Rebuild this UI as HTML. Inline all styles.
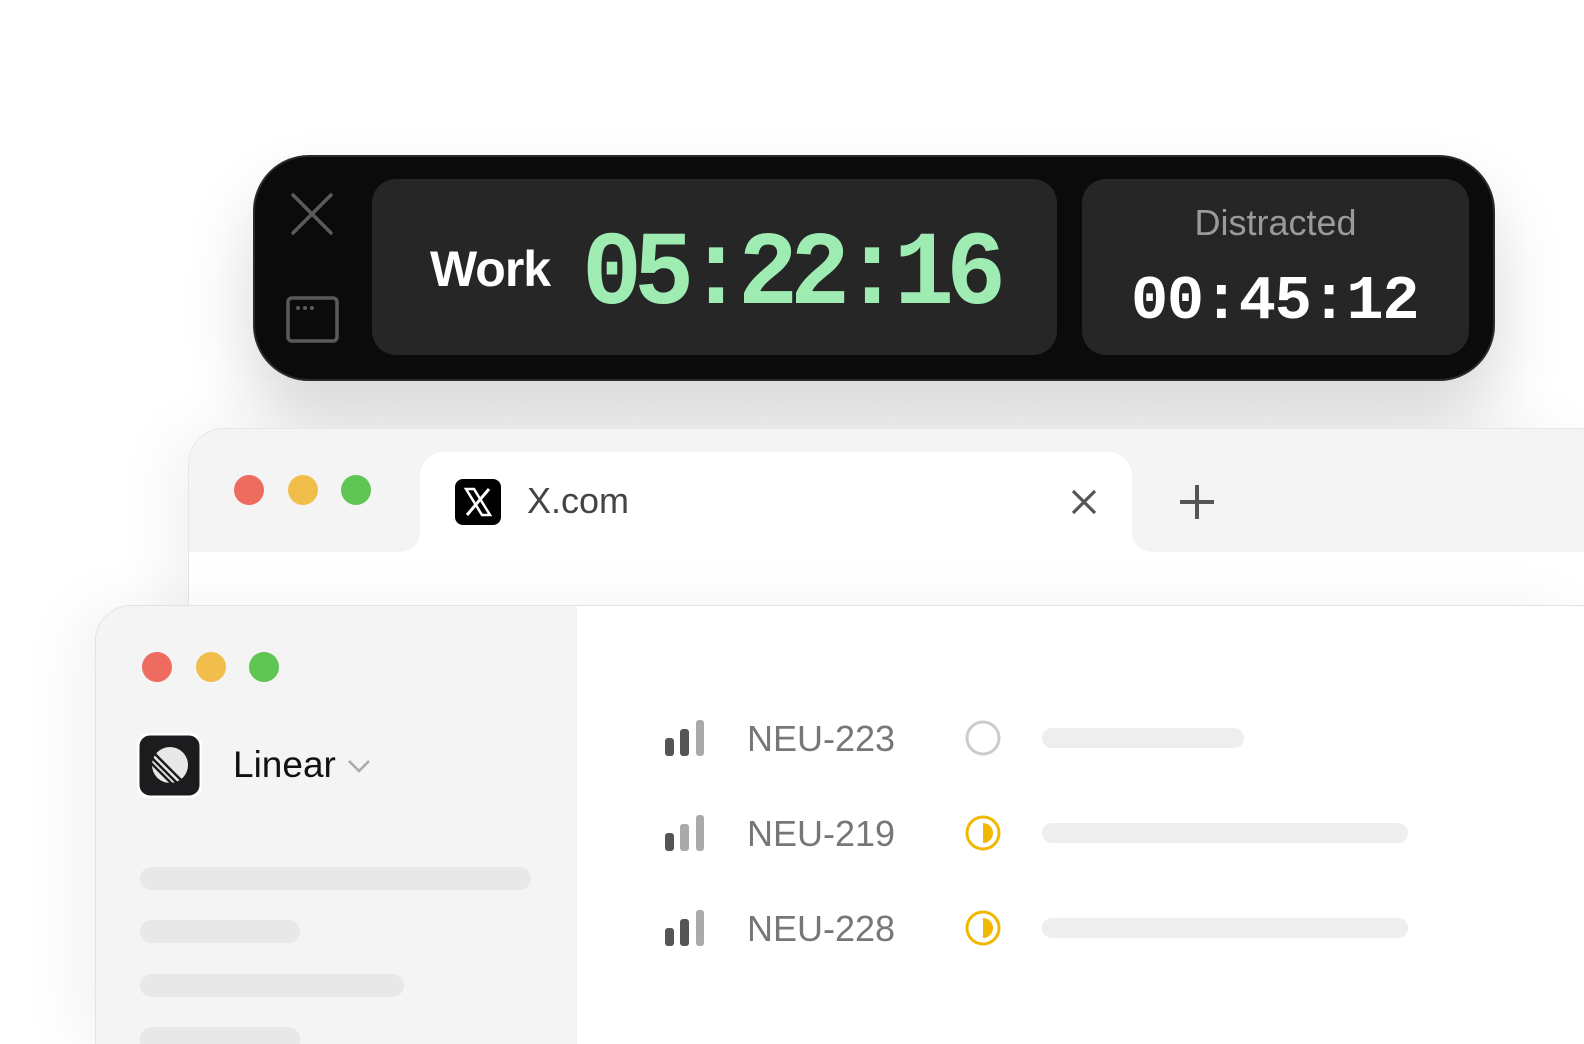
<!DOCTYPE html><html style="overflow:hidden;height:1044px"><head><style>
html,body{overflow:hidden}
body{margin:0;width:1584px;height:1044px;background:#fff;position:relative;overflow:hidden;font-family:"Liberation Sans",sans-serif}
#wrap{position:absolute;left:0;top:0;width:1584px;height:1044px;overflow:hidden}
.a{position:absolute}
.mono{font-family:"Liberation Mono","DejaVu Sans Mono",monospace;font-weight:bold}
.dot{position:absolute;width:30px;height:30px;border-radius:50%}
.r{background:#ee6b5f}.y{background:#f2be4b}.g{background:#5fc553}
.sk{position:absolute;background:#e8e8e8;border-radius:12px;height:23px}
</style></head><body><div id="wrap">
<div class="a" style="left:253px;top:155px;width:1238px;height:222px;border-radius:56px;background:#0b0b0b;border:2px solid #2a2a2a;box-shadow:0 40px 70px rgba(0,0,0,.16)"></div>
<svg class="a" style="left:286px;top:190px" width="54" height="156"><path d="M7 5L45 43M45 5L7 43" stroke="#5a5a5a" stroke-width="3.5" stroke-linecap="round"/><rect x="2" y="108" width="49" height="43" rx="4" fill="none" stroke="#5a5a5a" stroke-width="3.5"/><circle cx="12" cy="118" r="2" fill="#5a5a5a"/><circle cx="19" cy="118" r="2" fill="#5a5a5a"/><circle cx="26" cy="118" r="2" fill="#5a5a5a"/></svg>
<div class="a" style="left:372px;top:179px;width:685px;height:176px;border-radius:24px;background:#262626"></div>
<div class="a" style="left:430px;top:240px;font-size:50px;font-weight:bold;color:#fff;letter-spacing:-1px">Work</div>
<div class="a mono" style="left:582px;top:217px;font-size:100px;color:#9fecb2;letter-spacing:-8px;transform:scaleY(1.05);transform-origin:left top">05:22:16</div>
<div class="a" style="left:1082px;top:179px;width:387px;height:176px;border-radius:24px;background:#262626"></div>
<div class="a" style="left:1082px;width:387px;top:202px;text-align:center;font-size:36px;color:#9a9a9a">Distracted</div>
<div class="a mono" style="left:1131px;top:266px;font-size:62px;color:#fff;letter-spacing:-1.3px">00:45:12</div>
<div class="a" style="left:188px;top:428px;width:1396px;height:616px;border-radius:36px 0 0 0;background:#fff;border:1.5px solid #e6e6e6;border-right:none;border-bottom:none;overflow:hidden;box-shadow:-20px 0 60px rgba(0,0,0,.05)">
<div class="a" style="left:0;top:0;width:100%;height:123px;background:#f4f4f4"></div>
<div class="a" style="left:231px;top:23px;width:712px;height:100px;background:#fff;border-radius:24px 24px 0 0"></div>
<div class="a" style="left:211px;top:103px;width:20px;height:20px;background:#fff"></div><div class="a" style="left:211px;top:83px;width:20px;height:40px;background:#f4f4f4;border-radius:0 0 20px 0"></div>
<div class="a" style="left:943px;top:103px;width:20px;height:20px;background:#fff"></div><div class="a" style="left:943px;top:83px;width:20px;height:40px;background:#f4f4f4;border-radius:0 0 0 20px"></div>
</div>
<div class="dot r" style="left:234px;top:475px"></div><div class="dot y" style="left:288px;top:475px"></div><div class="dot g" style="left:341px;top:475px"></div>
<svg class="a" style="left:455px;top:479px" width="46" height="46"><rect width="46" height="46" rx="8" fill="#000"/><path d="M11 10h8l16 26h-8z" fill="none" stroke="#fff" stroke-width="2.5"/><path d="M34 10L12 36" stroke="#fff" stroke-width="3"/></svg>
<div class="a" style="left:527px;top:480px;font-size:36px;color:#444">X.com</div>
<svg class="a" style="left:1070px;top:488px" width="28" height="28"><path d="M3 3L25 25M25 3L3 25" stroke="#555" stroke-width="3.2"/></svg>
<svg class="a" style="left:1178px;top:483px" width="38" height="38"><path d="M19 2V36M2 19H36" stroke="#555" stroke-width="4"/></svg>
<div class="a" style="left:95px;top:605px;width:1489px;height:439px;border-radius:36px 0 0 0;background:#fff;border:1.5px solid #e3e3e3;border-right:none;border-bottom:none;overflow:hidden;box-shadow:-20px 0 60px rgba(0,0,0,.05)">
<div class="a" style="left:0;top:0;width:481px;height:100%;background:#f4f4f4"></div>
</div>
<div class="dot r" style="left:142px;top:652px"></div><div class="dot y" style="left:196px;top:652px"></div><div class="dot g" style="left:249px;top:652px"></div>
<svg class="a" style="left:137px;top:733px" width="65" height="65"><rect x="1" y="1" width="63" height="63" rx="12" fill="#1c1c1e" stroke="#fff" stroke-width="3"/><circle cx="33" cy="32" r="18" fill="#e8e8e8"/><path d="M14 30L35 51M15 25L40 50M17 20L45 48" stroke="#1c1c1e" stroke-width="2.5"/></svg>
<div class="a" style="left:233px;top:744px;font-size:37px;color:#111">Linear</div>
<svg class="a" style="left:347px;top:758px" width="24" height="16"><path d="M2 3L12 13L22 3" fill="none" stroke="#aaa" stroke-width="2.5"/></svg>
<div class="sk" style="left:140px;top:867px;width:391px"></div>
<div class="sk" style="left:140px;top:920px;width:160px"></div>
<div class="sk" style="left:140px;top:974px;width:264px"></div>
<div class="sk" style="left:140px;top:1027px;width:160px;height:17px;border-radius:12px 12px 0 0"></div>
<div class="a" style="left:0;top:718px"><svg class="a" style="left:665px;top:2px" width="40" height="36"><rect x="0" y="18" width="9" height="18" rx="3" fill="#555"/><rect x="15" y="9" width="9" height="27" rx="3" fill="#555"/><rect x="31" y="0" width="8" height="36" rx="3" fill="#aaa"/></svg><div class="a" style="left:747px;top:0;font-size:36px;color:#777;white-space:nowrap">NEU-223</div><svg class="a" style="left:964px;top:1px" width="38" height="38"><circle cx="19" cy="19" r="16" fill="none" stroke="#ccc" stroke-width="3"/></svg><div class="a" style="left:1042px;top:10px;width:202px;height:20px;border-radius:10px;background:#eee"></div></div>
<div class="a" style="left:0;top:813px"><svg class="a" style="left:665px;top:2px" width="40" height="36"><rect x="0" y="18" width="9" height="18" rx="3" fill="#555"/><rect x="15" y="9" width="9" height="27" rx="3" fill="#aaa"/><rect x="31" y="0" width="8" height="36" rx="3" fill="#aaa"/></svg><div class="a" style="left:747px;top:0;font-size:36px;color:#777;white-space:nowrap">NEU-219</div><svg class="a" style="left:964px;top:1px" width="38" height="38"><circle cx="19" cy="19" r="16" fill="none" stroke="#f0b800" stroke-width="3"/><path d="M19 9A10 10 0 0 1 19 29Z" fill="#f0b800"/></svg><div class="a" style="left:1042px;top:10px;width:366px;height:20px;border-radius:10px;background:#eee"></div></div>
<div class="a" style="left:0;top:908px"><svg class="a" style="left:665px;top:2px" width="40" height="36"><rect x="0" y="18" width="9" height="18" rx="3" fill="#555"/><rect x="15" y="9" width="9" height="27" rx="3" fill="#555"/><rect x="31" y="0" width="8" height="36" rx="3" fill="#aaa"/></svg><div class="a" style="left:747px;top:0;font-size:36px;color:#777;white-space:nowrap">NEU-228</div><svg class="a" style="left:964px;top:1px" width="38" height="38"><circle cx="19" cy="19" r="16" fill="none" stroke="#f0b800" stroke-width="3"/><path d="M19 9A10 10 0 0 1 19 29Z" fill="#f0b800"/></svg><div class="a" style="left:1042px;top:10px;width:366px;height:20px;border-radius:10px;background:#eee"></div></div>
</div></body></html>
